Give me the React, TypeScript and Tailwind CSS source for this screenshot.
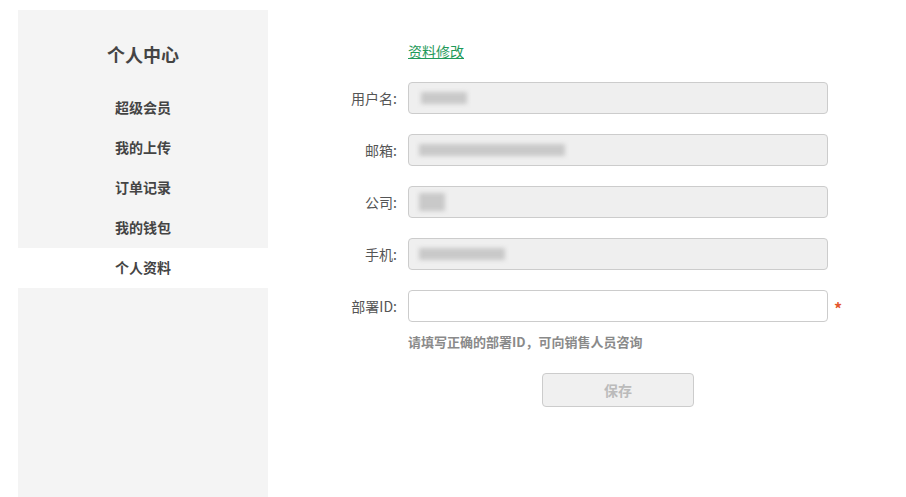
import React from "react";

const font = { fontFamily: '"Microsoft YaHei", "Noto Sans CJK SC", "Liberation Sans", sans-serif' };

const menu = ["超级会员", "我的上传", "订单记录", "我的钱包", "个人资料"];

interface FieldProps {
  label: string;
  blur?: string;
  editable?: boolean;
}

const Field: React.FC<FieldProps> = ({ label, blur, editable }) => {
  return (
    <div className="flex items-center h-[32px] mb-[20px]">
      <label className="w-[130px] text-right text-[14px] text-[#555] pr-[1px]">{label}:</label>
      {editable ? (
        <>
          <input className="ml-[10px] w-[420px] h-[32px] rounded-[4px] border border-[#cccccc] bg-white outline-none px-2" />
          <span className="ml-[6px] text-[#e4572e] text-[16px] font-bold mt-[4px]">*</span>
        </>
      ) : (
        <div className="ml-[10px] w-[420px] h-[32px] rounded-[4px] border border-[#cccccc] bg-[#efefef] flex items-center pl-[10px]">
          <div className={`h-[12px] bg-[#c9c9c9] blur-[2px] ${blur}`} />
        </div>
      )}
    </div>
  );
};

export default function App() {
  return (
    <div className="flex bg-white h-[497px] overflow-hidden" style={font}>
      <aside className="mt-[10px] ml-[18px] w-[250px] h-[487px] bg-[#f4f4f4] flex flex-col">
        <h2 className="pt-[32px] h-[78px] text-center text-[18px] leading-[24px] font-bold text-[#444]">个人中心</h2>
        {menu.map((m, i) => (
          <div
            key={m}
            className={`h-[40px] pb-[2px] flex items-center justify-center text-[14px] font-bold text-[#444] ${i === 4 ? "bg-white" : ""}`}
          >
            {m}
          </div>
        ))}
      </aside>
      <main className="flex flex-col">
        <div className="pl-[140px] pt-[38px] h-[82px]">
          <a href="#" className="text-[14px] leading-[18px] text-[#1f9a5a] underline">资料修改</a>
        </div>
        <Field label="用户名" blur="w-[46px] ml-[2px]" />
        <Field label="邮箱" blur="w-[146px]" />
        <Field label="公司" blur="w-[26px] h-[18px]" />
        <Field label="手机" blur="w-[86px]" />
        <Field label="部署ID" editable />
        <p className="-mt-[9px] pl-[140px] text-[13px] leading-[18px] font-bold text-[#8a8a8a]">
          请填写正确的部署ID，可向销售人员咨询
        </p>
        <div className="pl-[274px] mt-[22px]">
          <button className="w-[152px] h-[34px] rounded-[4px] border border-[#cccccc] bg-[#f0f0f0] text-[14px] font-bold text-[#bbbbbb]">
            保存
          </button>
        </div>
      </main>
    </div>
  );
}
